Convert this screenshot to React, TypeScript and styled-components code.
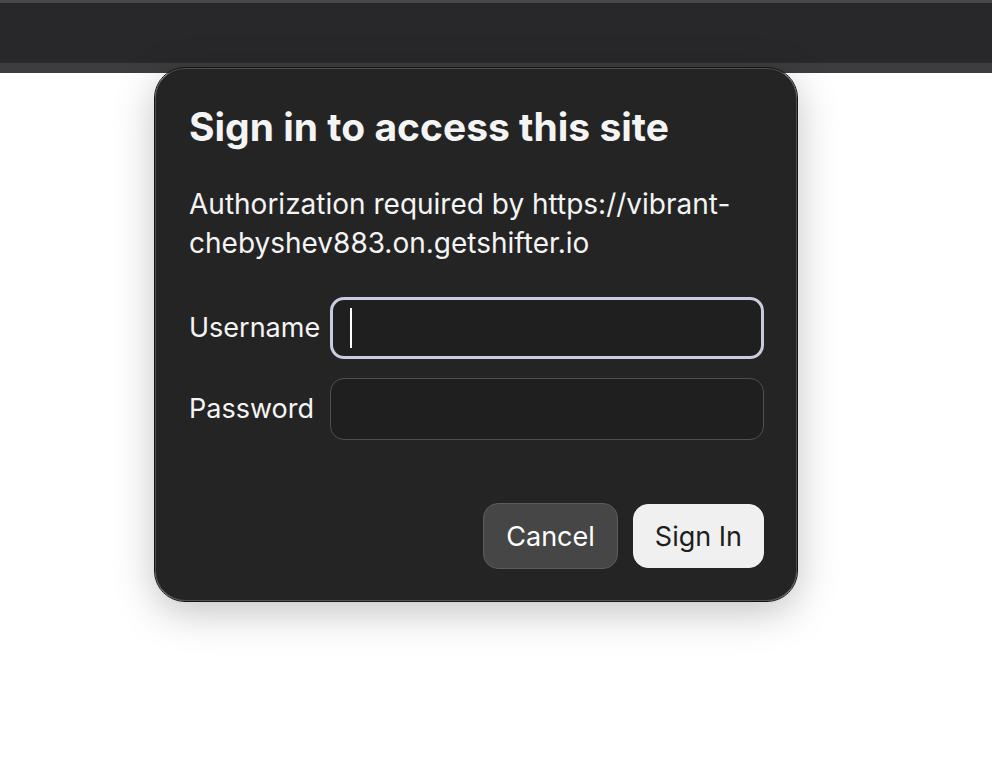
import React from "react";
import styled, { createGlobalStyle } from "styled-components";

const Global = createGlobalStyle`
  html, body { margin: 0; padding: 0; background: #ffffff; }
  body { font-family: Inter, "Open Sans", "Liberation Sans", sans-serif; -webkit-font-smoothing: antialiased; }
`;

const Page = styled.div`
  position: relative;
  width: 992px;
  height: 760px;
  overflow: hidden;
  background: #ffffff;
`;

const TopBar = styled.div`
  height: 60px;
  background: #28282a;
  border-top: 3px solid #48484b;
  border-bottom: 10px solid #3d3d40;
  box-shadow: inset 0 -1px 0 #2c2c2e;
`;

const Dialog = styled.div`
  position: absolute;
  left: 155px;
  top: 68px;
  width: 642px;
  height: 533px;
  box-sizing: border-box;
  background: #242424;
  border: 1px solid #505050;
  outline: 1px solid #151515;
  border-radius: 30px;
  box-shadow: 0 10px 40px rgba(0, 0, 0, 0.25);
  padding: 30px 32px 31px 33px;
  display: flex;
  flex-direction: column;
  color: #f4f4f4;
`;

const Title = styled.h1`
  margin: 0;
  font-size: 39px;
  font-weight: 700;
  line-height: 56px;
`;

const Message = styled.p`
  margin: 30px 0 0;
  font-size: 28px;
  line-height: 39px;
  font-weight: 400;
`;

const Form = styled.div`
  margin-top: 34px;
  display: grid;
  grid-template-columns: auto 1fr;
  column-gap: 10px;
  row-gap: 19px;
  align-items: center;
`;

const Label = styled.label`
  font-size: 27px;
  line-height: 32px;
`;

const Field = styled.div<{ $focused?: boolean }>`
  position: relative;
  height: 62px;
  box-sizing: border-box;
  border-radius: 14px;
  background: #1f1f1f;
  border: ${(p) => (p.$focused ? "3px solid #c9cbe0" : "1px solid #505050")};
`;

const Caret = styled.span`
  position: absolute;
  left: 17px;
  top: 8px;
  width: 2px;
  height: 40px;
  background: #ffffff;
`;

const Actions = styled.div`
  margin-top: auto;
  display: flex;
  justify-content: flex-end;
  align-items: center;
  gap: 15px;
`;

const Button = styled.button<{ $primary?: boolean }>`
  height: ${(p) => (p.$primary ? "64px" : "66px")};
  box-sizing: border-box;
  padding: 0 ${(p) => (p.$primary ? "21px" : "22px")};
  border-radius: 15px;
  font-family: inherit;
  font-size: 27px;
  border: 1px solid ${(p) => (p.$primary ? "#f0f0f0" : "#5c5c5c")};
  background: ${(p) => (p.$primary ? "#f0f0f0" : "#464646")};
  color: ${(p) => (p.$primary ? "#1e1e1e" : "#ffffff")};
`;

export default function App() {
  return (
    <Page>
      <Global />
      <TopBar />
      <Dialog>
        <Title>Sign in to access this site</Title>
        <Message>
          Authorization required by https://vibrant-
          <br />
          chebyshev883.on.getshifter.io
        </Message>
        <Form>
          <Label>Username</Label>
          <Field $focused>
            <Caret />
          </Field>
          <Label>Password</Label>
          <Field />
        </Form>
        <Actions>
          <Button>Cancel</Button>
          <Button $primary>Sign In</Button>
        </Actions>
      </Dialog>
    </Page>
  );
}
